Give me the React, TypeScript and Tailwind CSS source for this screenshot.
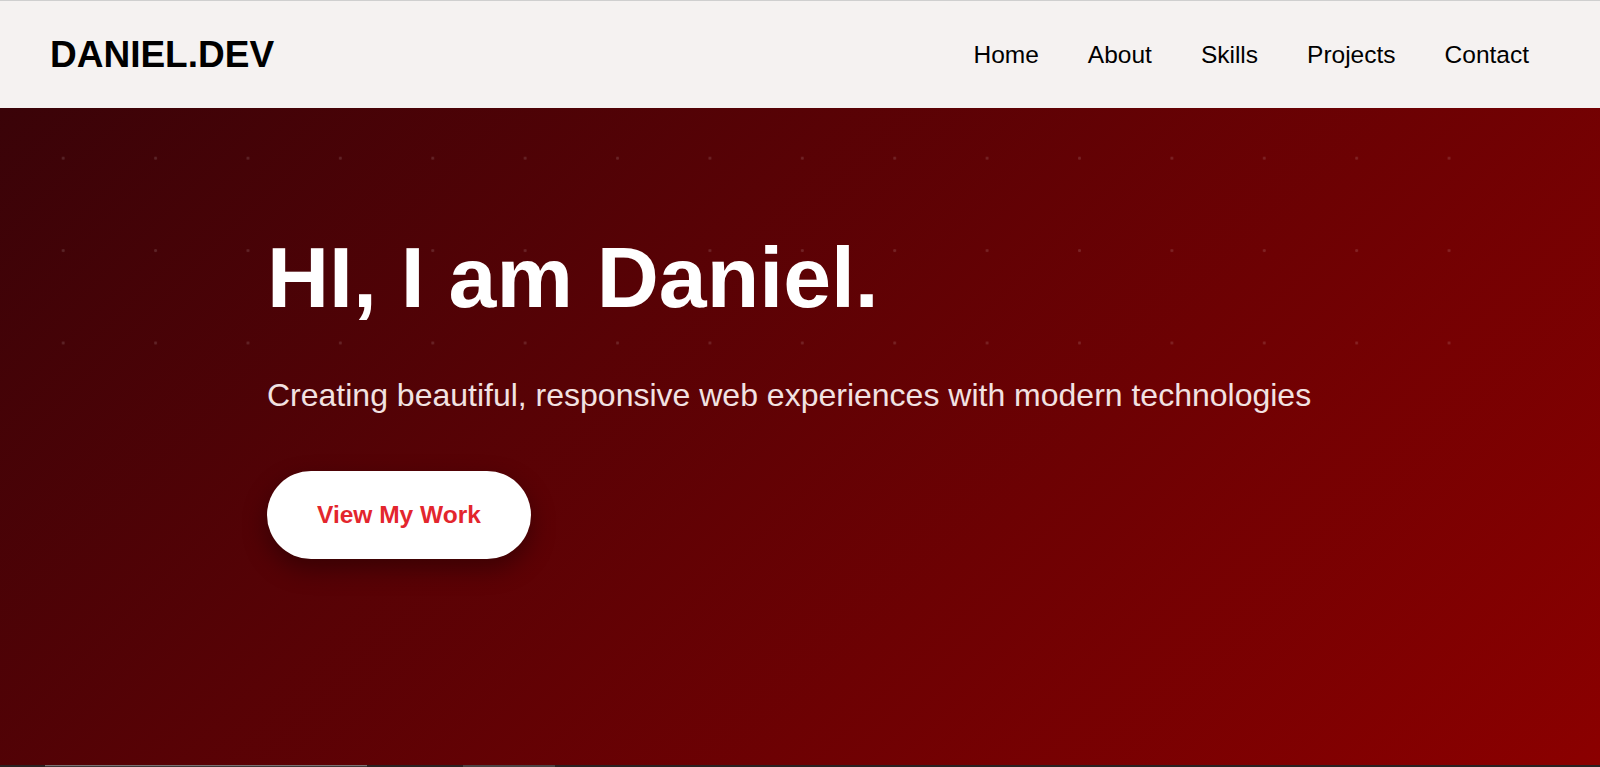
const navLinks = ["Home", "About", "Skills", "Projects", "Contact"];

export default function App() {
  return (
    <div className="min-h-screen font-['Liberation_Sans',Arial,sans-serif]">
      <header className="flex h-[108px] items-center justify-between border-t border-[#cfcfcf] bg-[#f5f2f1] pl-[50px] pr-[71px]">
        <a href="#" className="text-[37px] leading-[40px] font-bold text-black">
          DANIEL.DEV
        </a>
        <nav className="flex items-center gap-[49px]">
          {navLinks.map((link) => (
            <a key={link} href="#" className="text-[24.5px] leading-7 text-black">
              {link}
            </a>
          ))}
        </nav>
      </header>

      <section className="relative h-[657px] overflow-hidden bg-[linear-gradient(135deg,#3a0308_0%,#8b0000_100%)]">
        <div className="absolute left-0 top-0 h-[300px] w-[1500px] bg-[radial-gradient(circle,rgba(255,255,255,0.13)_1.2px,transparent_1.8px)] bg-[size:92.4px_92.4px] bg-[position:17px_4px]" />
        <div className="relative mx-auto max-w-[1066px] pt-[119px]">
          <h1 className="text-[86px] leading-[100px] font-bold text-white">
            HI, I am Daniel.
          </h1>
          <p className="mt-[52px] text-[32px] leading-8 text-[#f2e2e2]">
            Creating beautiful, responsive web experiences with modern technologies
          </p>
          <button className="mt-[60px] rounded-full bg-white px-[50px] py-[30px] text-[24.5px] leading-7 font-bold text-[#e3262d] shadow-[0_10px_25px_rgba(0,0,0,0.35)]">
            View My Work
          </button>
        </div>
      </section>

      <section className="bg-[#2a2222] pb-24">
        <div className="flex gap-[96px] pl-[45px]">
          <div className="h-10 w-[322px] border-t border-[#7a7373] bg-[#3e3838]" />
          <div className="h-10 w-[92px] bg-[#4a4444]" />
        </div>
        <div className="mx-auto max-w-[1066px] pt-16 text-white">
          <h2 className="text-4xl font-bold">About Me</h2>
          <p className="mt-6 text-lg text-[#d8cfcf]">
            I build fast, accessible interfaces for the web.
          </p>
        </div>
      </section>
    </div>
  );
}
